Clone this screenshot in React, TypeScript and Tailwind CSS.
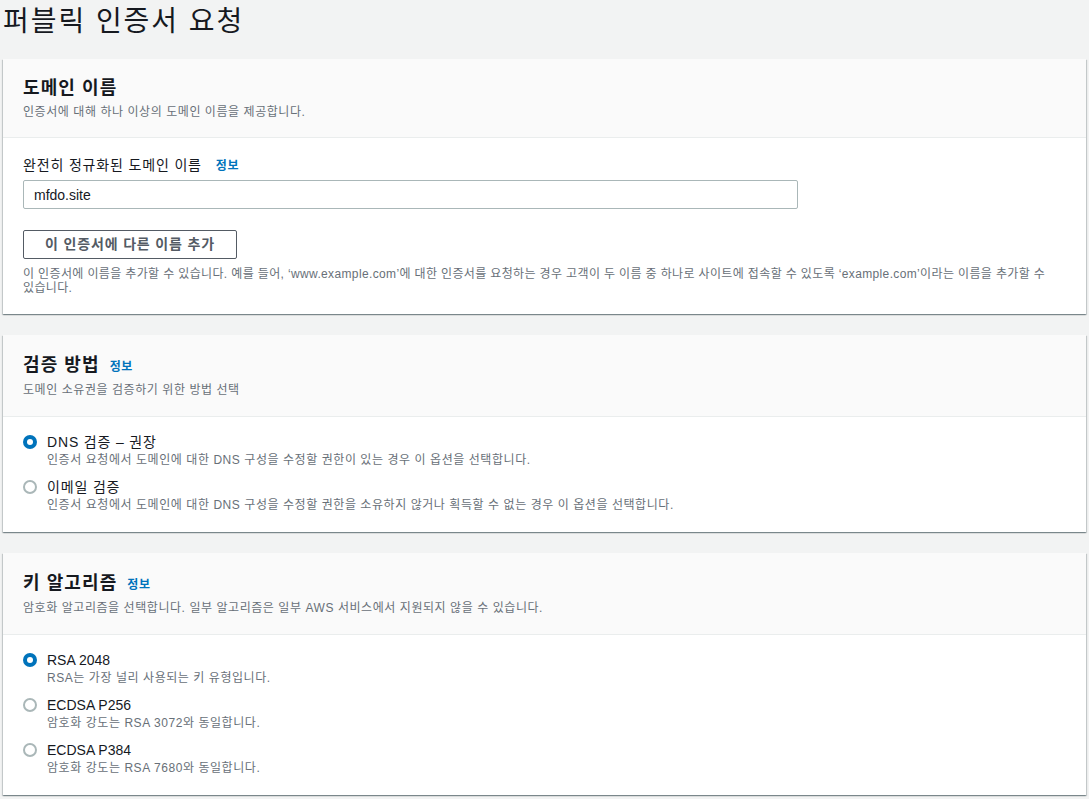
import React from 'react'

const FONT = '"Liberation Sans", "Noto Sans CJK KR", sans-serif'

function Info({ className = '' }: { className?: string }) {
  return <span className={`text-[12px] font-bold text-[#0073bb] ${className}`}>정보</span>
}

function Radio({ checked }: { checked?: boolean }) {
  return checked ? (
    <span className="mt-[3px] flex h-[14px] w-[14px] shrink-0 items-center justify-center rounded-full bg-[#0073bb]">
      <span className="h-[6px] w-[6px] rounded-full bg-white" />
    </span>
  ) : (
    <span className="mt-[3px] h-[14px] w-[14px] shrink-0 rounded-full border-2 border-[#aab7b8] bg-white" />
  )
}

function Card({
  title,
  info,
  desc,
  children,
}: {
  title: string
  info?: boolean
  desc: string
  children: React.ReactNode
}) {
  return (
    <section className="mx-[3px] bg-white shadow-[0_1px_1px_0_rgba(0,28,36,0.3),1px_1px_1px_0_rgba(0,28,36,0.15),-1px_1px_1px_0_rgba(0,28,36,0.15)]">
      <div
        className={`border-b border-[#eaeded] bg-[#fafafa] px-5 ${
          info ? 'pt-[17px] pb-[18px]' : 'pt-[16px] pb-[17px]'
        }`}
      >
        <div className="flex items-baseline gap-[10px]">
          <h2 className="text-[18px] leading-[26px] font-bold tracking-[0.06em] text-[#16191f]">{title}</h2>
          {info && <Info />}
        </div>
        <p className={`${info ? 'mt-[4px]' : 'mt-[3px]'} text-[12px] leading-[16px] text-[#687078]`}>
          {desc}
        </p>
      </div>
      <div className="px-5 pt-[15px] pb-[19px]">{children}</div>
    </section>
  )
}

function Option({
  label,
  desc,
  checked,
  latin,
}: {
  label: string
  desc: string
  checked?: boolean
  latin?: boolean
}) {
  return (
    <div className="flex gap-[10px]">
      <Radio checked={checked} />
      <div>
        <div className={`text-[14px] leading-[20px] text-[#16191f] ${latin ? 'tracking-normal' : 'tracking-[0.06em]'}`}>
          {label}
        </div>
        <div className="text-[12px] leading-[16px] text-[#687078]">{desc}</div>
      </div>
    </div>
  )
}

export default function App() {
  return (
    <div className="min-h-[799px] bg-[#f2f3f3] pb-4 tracking-[0.035em]" style={{ fontFamily: FONT }}>
      <h1 className="px-[3px] pt-[2px] text-[28px] leading-[40px] font-normal tracking-[0.07em] text-[#16191f]">
        퍼블릭 인증서 요청
      </h1>

      <div className="mt-[17px] flex flex-col gap-[21px]">
        <Card title="도메인 이름" desc="인증서에 대해 하나 이상의 도메인 이름을 제공합니다.">
          <div className="flex items-baseline gap-[14px] pt-[2px]">
            <span className="text-[14px] leading-[20px] tracking-[0.06em] text-[#16191f]">
              완전히 정규화된 도메인 이름
            </span>
            <Info />
          </div>
          <input
            readOnly
            value="mfdo.site"
            className="mt-[5px] block h-[29px] w-[775px] rounded-[2px] border border-[#aab7b8] bg-white px-[10px] text-[14px] tracking-normal text-[#16191f] outline-none"
          />
          <button className="mt-[21px] h-[29px] w-[214px] rounded-[2px] border border-[#545b64] bg-white text-[14px] font-bold tracking-[0.06em] text-[#545b64]">
            이 인증서에 다른 이름 추가
          </button>
          <p className="mt-[8px] break-keep text-[12px] leading-[14px] tracking-[0.03em] text-[#687078]">
            이 인증서에 이름을 추가할 수 있습니다. 예를 들어, ‘www.example.com’에 대한 인증서를 요청하는 경우
            고객이 두 이름 중 하나로 사이트에 접속할 수 있도록 ‘example.com’이라는 이름을 추가할 수 있습니다.
          </p>
        </Card>

        <Card title="검증 방법" info desc="도메인 소유권을 검증하기 위한 방법 선택">
          <div className="flex flex-col gap-[9px]">
            <Option
              checked
              label="DNS 검증 – 권장"
              desc="인증서 요청에서 도메인에 대한 DNS 구성을 수정할 권한이 있는 경우 이 옵션을 선택합니다."
            />
            <Option
              label="이메일 검증"
              desc="인증서 요청에서 도메인에 대한 DNS 구성을 수정할 권한을 소유하지 않거나 획득할 수 없는 경우 이 옵션을 선택합니다."
            />
          </div>
        </Card>

        <Card
          title="키 알고리즘"
          info
          desc="암호화 알고리즘을 선택합니다. 일부 알고리즘은 일부 AWS 서비스에서 지원되지 않을 수 있습니다."
        >
          <div className="flex flex-col gap-[9px]">
            <Option checked latin label="RSA 2048" desc="RSA는 가장 널리 사용되는 키 유형입니다." />
            <Option latin label="ECDSA P256" desc="암호화 강도는 RSA 3072와 동일합니다." />
            <Option latin label="ECDSA P384" desc="암호화 강도는 RSA 7680와 동일합니다." />
          </div>
        </Card>
      </div>
    </div>
  )
}
